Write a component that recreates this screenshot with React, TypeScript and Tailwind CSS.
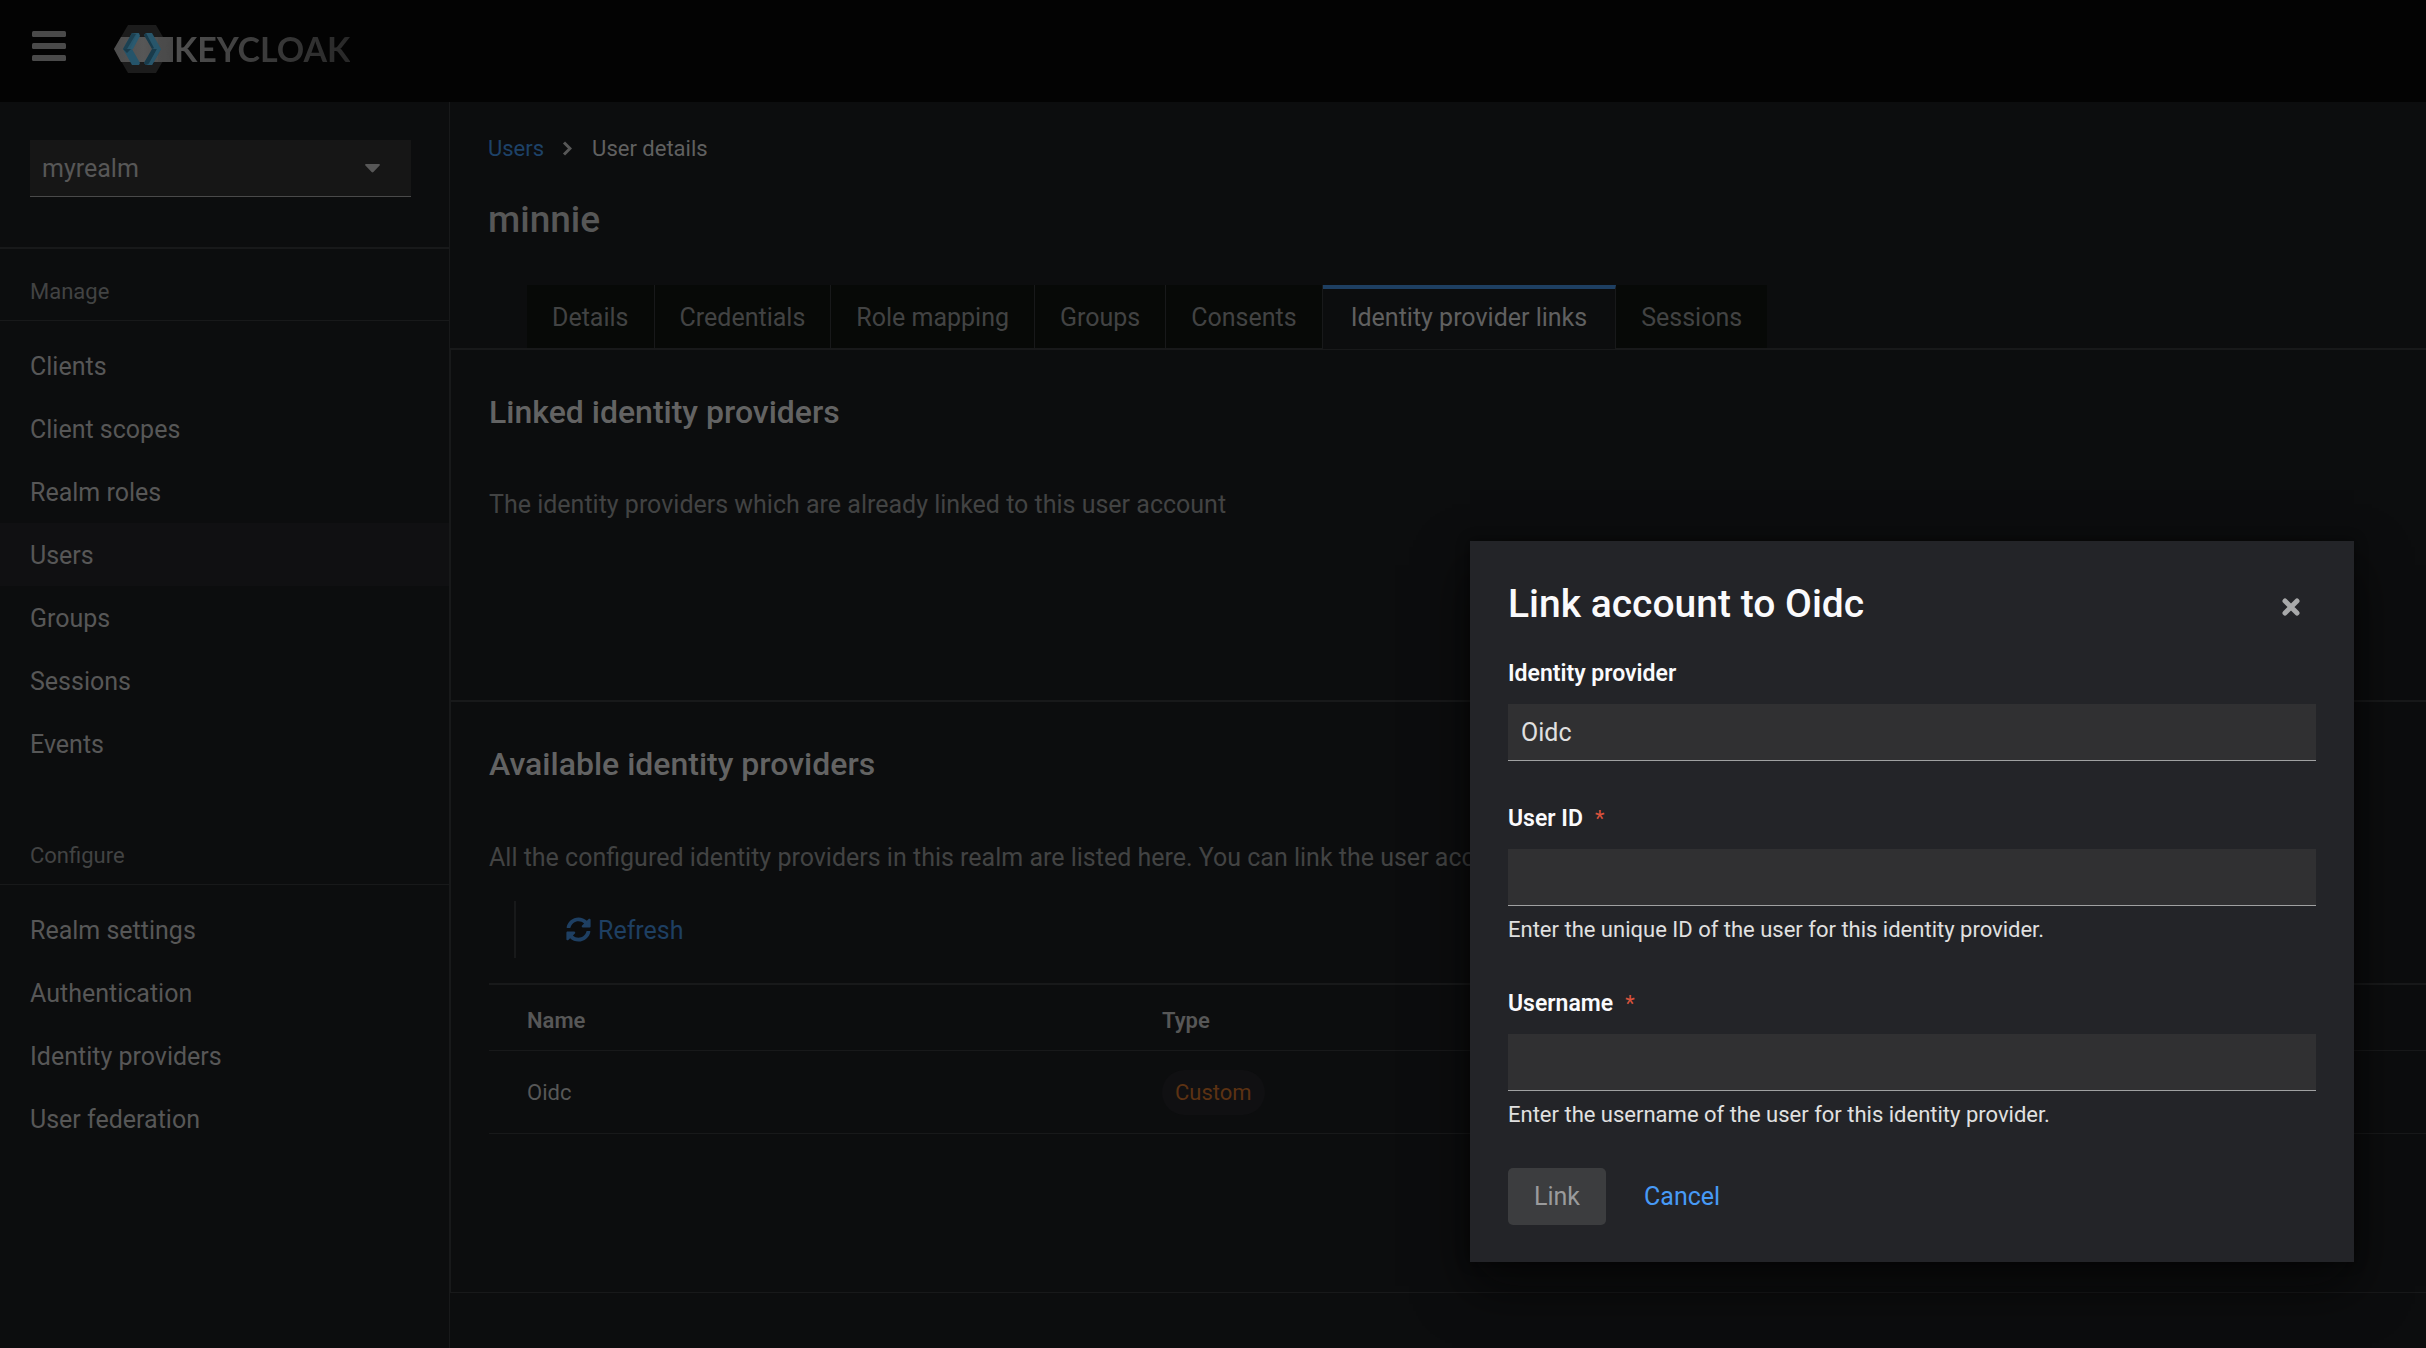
import React, { useState } from "react";

const MANAGE = ["Clients", "Client scopes", "Realm roles", "Users", "Groups", "Sessions", "Events"];
const CONFIGURE = ["Realm settings", "Authentication", "Identity providers", "User federation"];
const TABS = [
  "Details",
  "Credentials",
  "Role mapping",
  "Groups",
  "Consents",
  "Identity provider links",
  "Sessions",
];

function LogoMark() {
  return (
    <svg width="60" height="48" viewBox="0 0 60 48" aria-hidden="true">
      <defs>
        <linearGradient id="band" x1="0" x2="1" y1="0" y2="0">
          <stop offset="0" stopColor="#4c4c4c" />
          <stop offset="0.5" stopColor="#575757" />
          <stop offset="1" stopColor="#474747" />
        </linearGradient>
      </defs>
      <polygon points="14,0 42,0 56,24 42,48 14,48 0,24" fill="#1c1c1c" />
      <polygon points="7,12 59,12 59,37 7,37 0,24" fill="url(#band)" />
      <polygon points="44,12 58,12 51,24 58,37 44,37" fill="#4b4b4b" opacity="0.6" />
      <polygon points="18,8 25,8 18,24 9,24" fill="#28566b" />
      <polygon points="18,8 22,9 13,24 9,24" fill="#1c4152" />
      <polygon points="23,9 25,8 26,11 19,24 16,24" fill="#2a5a70" />
      <polygon points="9,24 18,24 26,38 25,40 18,40" fill="#25546a" />
      <polygon points="9,24 17,24 13,28" fill="#193b4b" />
      <polygon points="32,8 38,8 47,24 39,24 30,10" fill="#28566b" />
      <polygon points="30,10 32,8 40,23 38,24" fill="#193b4b" />
      <polygon points="39,24 47,24 38,40 32,40 30,38" fill="#23506a" />
      <polygon points="38,24 43,24 36,38 32,40 30,38" fill="#193b4b" />
      <polygon points="43,24 47,24 38,40 34,40" fill="#28566b" />
    </svg>
  );
}

function NavGroup({ title, items, current }: { title: string; items: string[]; current?: string }) {
  return (
    <section>
      <h2 className="flex h-[72px] items-center border-b border-[#18191a] px-[30px] pt-[15px] text-[22px] leading-8 text-[#424343]">
        {title}
      </h2>
      <ul className="pt-[13px]">
        {items.map((item) => (
          <li key={item}>
            <a
              href="#"
              aria-current={item === current ? "page" : undefined}
              className={
                item === current
                  ? "flex h-[63px] items-center bg-[#101012] px-[30px] pt-0.5 text-[#575757]"
                  : "flex h-[63px] items-center px-[30px] pt-0.5 text-[#575757]"
              }
            >
              {item}
            </a>
          </li>
        ))}
      </ul>
    </section>
  );
}

function Sidebar() {
  return (
    <nav aria-label="Global" className="w-[450px] shrink-0 border-r border-[#18191a]">
      <div className="border-b-2 border-[#18191a] pt-[38px] pr-[38px] pb-[50px] pl-[30px]">
        <div className="relative">
          <select
            aria-label="Realm"
            className="h-[57px] w-full appearance-none rounded-none border-b border-[#4a4a4a] bg-[#161616] px-3 pt-0.5 text-[25px] text-[#575757]"
          >
            <option>myrealm</option>
          </select>
          <svg
            width="15"
            height="9"
            viewBox="0 0 15 9"
            aria-hidden="true"
            className="pointer-events-none absolute top-6 right-[31px]"
          >
            <path d="M1 0h13c.9 0 1.200 1 .6 1.600L8.400 8.100c-.5.5-1.300.5-1.800 0L.4 1.600C-.2 1 .1 0 1 0z" fill="#575757" />
          </svg>
        </div>
      </div>
      <NavGroup title="Manage" items={MANAGE} current="Users" />
      <div className="h-[38px]" />
      <NavGroup title="Configure" items={CONFIGURE} />
    </nav>
  );
}

function Tabs() {
  return (
    <div role="tablist" className="flex h-[65px] border-b-2 border-[#18191a] pl-[77px]">
      {TABS.map((tab) => {
        const active = tab === "Identity provider links";
        return (
          <button
            key={tab}
            type="button"
            role="tab"
            aria-selected={active}
            className={
              active
                ? "-mb-px border-t-4 border-r border-[#18191a] border-t-[#1e3f62] bg-[#0c0d0e] px-7 pb-0.5 text-[#606060]"
                : "border-r border-[#18191a] bg-[#070907] px-[25px] pt-0.5 text-[#424343] last:border-r-0"
            }
          >
            {tab}
          </button>
        );
      })}
    </div>
  );
}

function LinkedProviders() {
  return (
    <section className="h-[352px] border-b-2 border-[#18191a] pt-[42px] pl-[38px]">
      <h2 className="text-[32px] leading-10 font-medium text-[#636363]">Linked identity providers</h2>
      <p className="pt-[53px] leading-10 text-[#424343]">
        The identity providers which are already linked to this user account
      </p>
    </section>
  );
}

function AvailableProviders() {
  return (
    <section className="h-[591px] border-b border-[#18191a] pt-[42px] pl-[38px]">
      <h2 className="text-[32px] leading-10 font-medium text-[#636363]">Available identity providers</h2>
      <p className="pt-[54px] leading-10 whitespace-nowrap text-[#424343]">
        All the configured identity providers in this realm are listed here. You can link the user account to any of
        the identity providers.
      </p>
      <div className="mt-[23px] ml-[25px] flex h-[57px] items-center border-l-2 border-[#18191a] pl-[50px]">
        <button type="button" className="flex items-center gap-[7px] pt-0.5 text-[#1e3f62]">
          <svg width="25" height="25" viewBox="0 0 512 512" fill="currentColor" aria-hidden="true" className="mb-0.5">
            <path d="M370.72 133.280C339.458 104.008 298.888 87.962 255.848 88c-77.458.068-144.328 53.178-162.791 126.850-1.344 5.363-6.122 9.150-11.651 9.150H24.103c-7.498 0-13.194-6.807-11.807-14.176C33.933 94.924 134.813 8 256 8c66.448 0 126.791 26.136 171.315 68.685L463.030 40.970C478.149 25.851 504 36.559 504 57.941V192c0 13.255-10.745 24-24 24H345.941c-21.382 0-32.090-25.851-16.971-40.971l41.750-41.749zM32 296h134.059c21.382 0 32.090 25.851 16.971 40.971l-41.750 41.750c31.262 29.273 71.835 45.319 114.876 45.280 77.418-.070 144.315-53.144 162.787-126.849 1.344-5.363 6.122-9.150 11.651-9.150h57.304c7.498 0 13.194 6.807 11.807 14.176C478.067 417.076 377.187 504 256 504c-66.448 0-126.791-26.136-171.315-68.685L48.970 471.030C33.851 486.149 8 475.441 8 454.059V320c0-13.255 10.745-24 24-24z" />
          </svg>
          Refresh
        </button>
      </div>
      <table className="mt-[25px] w-full border-t-2 border-[#18191a] text-left text-[22px]">
        <thead>
          <tr className="h-[66px] border-b border-[#18191a] text-[#575757]">
            <th className="w-[648px] pt-1.5 pl-[38px] font-semibold">Name</th>
            <th className="pt-1.5 pl-[25px] font-semibold">Type</th>
          </tr>
        </thead>
        <tbody>
          <tr className="h-[83px] border-b border-[#18191a] text-[#575757]">
            <td className="pt-0.5 pl-[38px]">Oidc</td>
            <td className="pt-0.5 pl-[25px]">
              <span className="inline-flex h-[45px] items-center rounded-full bg-[#101012] px-[13px] text-[#5c3213]">
                Custom
              </span>
            </td>
          </tr>
        </tbody>
      </table>
    </section>
  );
}

function Field({
  id,
  label,
  value,
  helper,
  onChange,
}: {
  id: string;
  label: string;
  value: string;
  helper?: string;
  onChange?: (value: string) => void;
}) {
  return (
    <div>
      <label htmlFor={id} className="flex gap-3 text-[23px] leading-8 font-semibold text-[#fafafc]">
        {label}
        {onChange && (
          <span aria-hidden="true" className="text-[22px] font-normal text-[#d9523c]">
            *
          </span>
        )}
      </label>
      <input
        id={id}
        type="text"
        value={value}
        readOnly={!onChange}
        required={!!onChange}
        onChange={(e) => onChange?.(e.target.value)}
        className="mt-3.5 block h-[57px] w-full border-b border-[#a0a1a2] bg-[#303032] px-[13px] text-[#e0e0e0] outline-none"
      />
      {helper && <p className="mt-2 text-[22px] leading-8 text-[#e0e0e0]">{helper}</p>}
    </div>
  );
}

function LinkDialog() {
  const [userId, setUserId] = useState("");
  const [username, setUsername] = useState("");
  return (
    <div
      role="dialog"
      aria-modal="true"
      aria-labelledby="dialog-title"
      className="absolute top-[541px] right-[72px] w-[884px] bg-[#232428] px-[38px] pt-[39px] pb-[37px] shadow-[0_24px_50px_rgba(3,3,3,0.64),0_0_12px_rgba(3,3,3,0.48)]"
    >
      <div className="flex h-[49px] items-center justify-between">
        <h1 id="dialog-title" className="text-[39px] leading-[49px] font-medium text-[#fafafc]">
          Link account to Oidc
        </h1>
        <button type="button" aria-label="Close" className="flex size-[50px] items-center justify-center pt-1">
          <svg width="18" height="18" viewBox="0 0 18 18" aria-hidden="true">
            <path d="M3 3l12 12M15 3L3 15" stroke="#a8a9aa" strokeWidth="5" strokeLinecap="round" />
          </svg>
        </button>
      </div>
      <form className="mt-[29px]" onSubmit={(e) => e.preventDefault()}>
        <div className="flex flex-col gap-[42px]">
          <Field id="provider" label="Identity provider" value="Oidc" />
          <Field
            id="user-id"
            label="User ID"
            value={userId}
            onChange={setUserId}
            helper="Enter the unique ID of the user for this identity provider."
          />
          <Field
            id="username"
            label="Username"
            value={username}
            onChange={setUsername}
            helper="Enter the username of the user for this identity provider."
          />
        </div>
        <div className="mt-[37px] flex gap-[13px]">
          <button type="submit" disabled className="h-[57px] rounded-[5px] bg-[#3c3d3f] px-[26px] text-[#9a9b9c]">
            Link
          </button>
          <button type="button" className="h-[57px] px-[25px] text-[#479af6]">
            Cancel
          </button>
        </div>
      </form>
    </div>
  );
}

export default function App() {
  return (
    <div className="relative flex min-h-screen flex-col overflow-hidden bg-[#0c0d0e] font-['Roboto',sans-serif] text-[25px]">
      <header className="flex h-[102px] items-start bg-[#030303] pl-8">
        <button type="button" aria-label="Global navigation" className="mt-[31px]">
          <svg width="34" height="30" viewBox="0 0 34 30" fill="#4a4a4a" aria-hidden="true">
            <rect width="34" height="6" rx="1.500" />
            <rect y="12" width="34" height="6" rx="1.500" />
            <rect y="24" width="34" height="6" rx="1.500" />
          </svg>
        </button>
        <a href="#" className="mt-[25px] ml-12 flex h-12 items-center">
          <LogoMark />
          <span className="bg-linear-to-r from-[#505050] to-[#282828] bg-clip-text pb-0.5 font-['Lato',sans-serif] text-[34px] font-bold text-transparent">
            KEYCLOAK
          </span>
        </a>
      </header>
      <div className="flex flex-1">
        <Sidebar />
        <main className="min-w-0 flex-1">
          <nav aria-label="Breadcrumb" className="mt-[30px] flex h-8 items-center pl-[38px] text-[22px]">
            <a href="#" className="text-[#1e4268]">
              Users
            </a>
            <svg width="10" height="15" viewBox="0 0 10 15" aria-hidden="true" className="mr-5 ml-[18px]">
              <path d="M2 1.500l6 6-6 6" fill="none" stroke="#575757" strokeWidth="3" />
            </svg>
            <span className="text-[#606060]">User details</span>
          </nav>
          <h1 className="mt-8 pl-[38px] text-[37px] leading-[48px] font-medium text-[#575757]">minnie</h1>
          <div className="mt-[41px]">
            <Tabs />
            <div className="border-l border-[#18191a]">
              <LinkedProviders />
              <AvailableProviders />
            </div>
          </div>
        </main>
      </div>
      <LinkDialog />
    </div>
  );
}
